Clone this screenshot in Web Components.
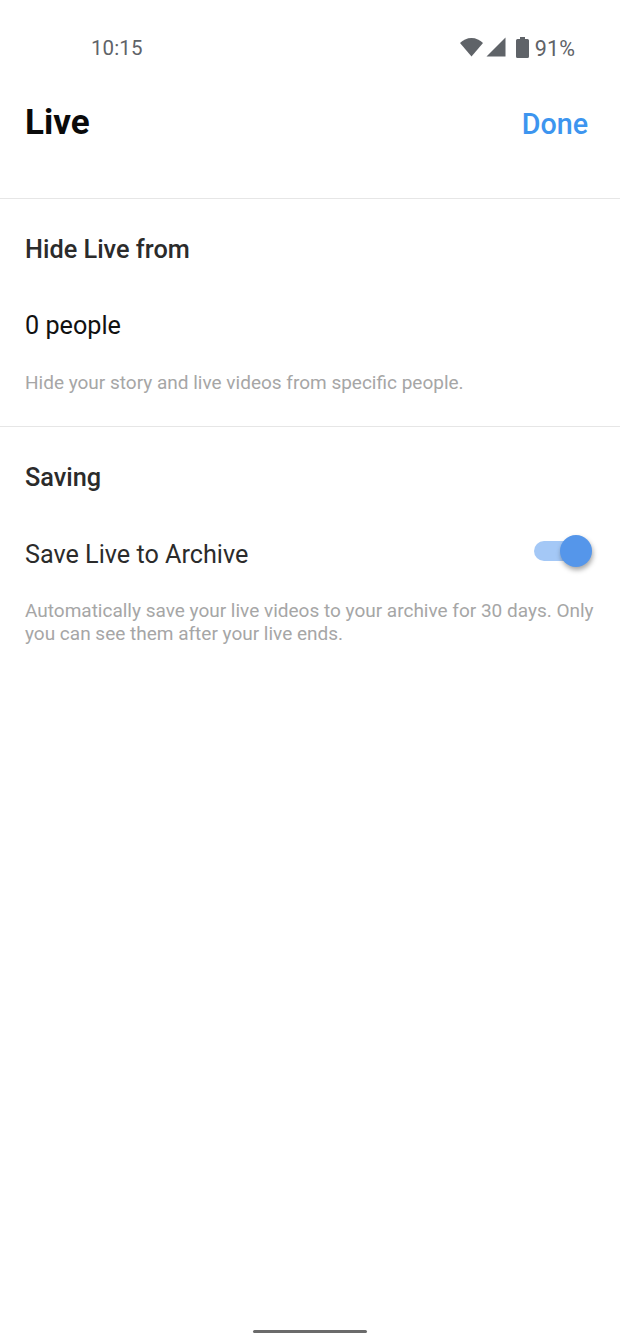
<!DOCTYPE html>
<html><head><meta charset="utf-8"><style>
html,body{margin:0;padding:0;background:#fff;height:100%}
body{font-family:Roboto,"Liberation Sans",sans-serif}
</style></head><body>
<app-screen>
<status-bar></status-bar>
<title-bar></title-bar>
<settings-section heading="Hide Live from" note="Hide your story and live videos from specific people."><span style="color:#111;margin-top:-2px">0 people</span></settings-section>
<settings-section heading="Saving" note="Automatically save your live videos to your archive for 30 days. Only you can see them after your live ends."><span>Save Live to Archive</span><toggle-switch slot="end"></toggle-switch></settings-section>
<nav-pill></nav-pill>
</app-screen>
<script>
function def(name,html){customElements.define(name,class extends HTMLElement{
 connectedCallback(){ if(this.shadowRoot)return; const r=this.attachShadow({mode:'open'});
  let h=html; for(const a of this.getAttributeNames()) h=h.split('{{'+a+'}}').join(this.getAttribute(a)); r.innerHTML=h; }
});}
def('app-screen',`<style>:host{display:flex;flex-direction:column;height:1343px;width:620px;overflow:hidden;box-sizing:border-box}
.grow{flex:1}</style><slot></slot>`);
def('status-bar',`<style>:host{display:flex;align-items:center;height:24px;padding:36px 45px 0 91px;color:#5f6368;font-size:20.5px;letter-spacing:.1px}
.t{flex:1}svg{display:block;fill:#5f6368}.r{display:flex;align-items:center}</style>
<span class="t">10:15</span><span class="r">
<svg width="25" height="20" viewBox="0 0 24 20" style="margin:-2px 2px 0 0"><path d="M12 19.5 .5 6C3.500 3 7.500 1 12 1s8.500 2 11.500 5z"/></svg>
<svg width="20" height="20" viewBox="0 0 20 20" style="margin:-2px 10px 0 0"><path d="M19.500 .5V19.500H.5z"/></svg>
<svg width="13" height="21" viewBox="0 0 13 21" style="margin:-1px 6px 0 0"><path d="M4 0h5v2h2.500q1.500 0 1.500 1.500v16q0 1.500-1.500 1.500h-10Q0 21 0 19.500v-16Q0 2 1.500 2H4z"/></svg>
<span style="font-size:21.500px">91%</span></span>`);
def('title-bar',`<style>:host{display:flex;justify-content:space-between;align-items:center;box-sizing:border-box;height:139px;padding:0 32px 13px 25px;border-bottom:1px solid #e6e6e6}
.a{font-size:35px;font-weight:700;color:#0a0a0a}.b{font-size:28.700px;font-weight:500;color:#3d95ef;margin-top:2px}</style><span class="a">Live</span><span class="b">Done</span>`);
def('settings-section',`<style>:host{display:block;box-sizing:border-box;height:228px;padding:0 25px;border-bottom:1px solid #e6e6e6}
:host(:last-of-type){border-bottom:0;height:auto}
.h{font-size:25.300px;font-weight:500;color:#2b2b2b;line-height:28px;padding-top:37px}
.row{display:flex;justify-content:space-between;align-items:center;font-size:25.200px;color:#2b2b2b;line-height:30px;margin-top:47.500px;height:30px}
.n{font-size:19px;line-height:23px;color:#a6a6a6;margin-top:29.500px}</style>
<div class="h">{{heading}}</div><div class="row"><slot></slot><slot name="end"></slot></div><div class="n">{{note}}</div>`);
def('toggle-switch',`<style>:host{display:block;position:relative;width:60px;height:34px;margin-right:3px;top:-3.500px}
.t{position:absolute;left:2px;top:7px;width:49px;height:20px;border-radius:10px;background:#a4c8f6}
.k{position:absolute;right:0;top:1px;width:32px;height:32px;border-radius:50%;background:#5596ea;box-shadow:1px 3px 5px rgba(0,0,0,.35)}</style><div class="t"></div><div class="k"></div>`);
def('nav-pill',`<style>:host{display:block;width:114px;height:3px;border-radius:2px;background:#6b6b6b;position:absolute;left:253px;top:1330px}</style>`);
</script>
</body></html>
